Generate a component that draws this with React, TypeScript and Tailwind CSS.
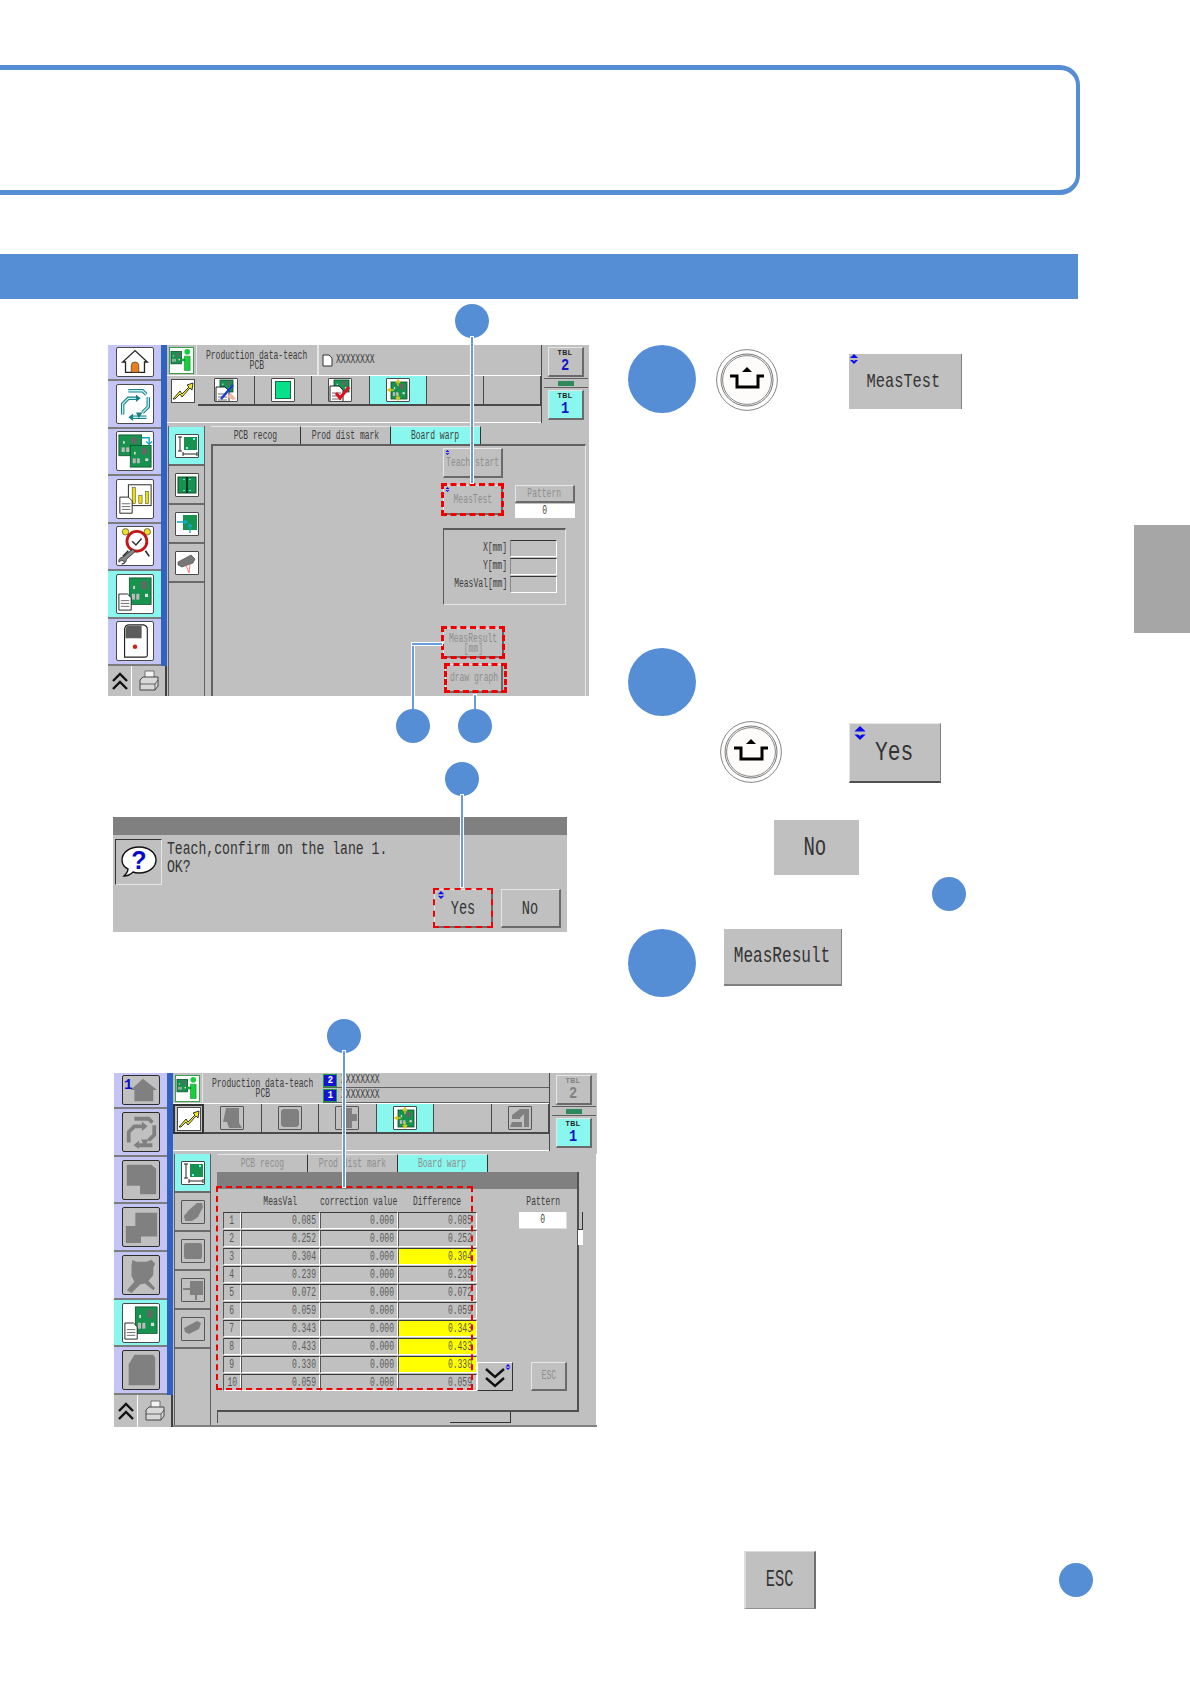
import type { ReactNode } from 'react'

const GRAY = '#808080'
const bevel =
  'border-t border-l border-t-[#e6e6e6] border-l-[#e6e6e6] border-r-2 border-b-2 border-r-[#6a6a6a] border-b-[#6a6a6a]'
const tiny = 'text-[12px] scale-x-[0.67]'
const ink = 'text-[#3c3c3c]'
const off = 'text-[#8e8e8e]'

function Txt({ className, children }: { className: string; children: ReactNode }) {
  return <span className={`inline-block whitespace-nowrap leading-none ${className}`}>{children}</span>
}

function Circle({ className }: { className: string }) {
  return <div className={`shrink-0 rounded-full bg-[#558ed5] ${className}`} />
}

function UpDown({ size, className }: { size: number; className: string }) {
  return (
    <svg width={size} height={size} viewBox="0 0 10 10" className={`absolute ${className}`}>
      <path d="M5 0 9 4H1Z M1 6H3.5L5 7 6.500 6H9L5 10Z" fill="#0a0af0" />
    </svg>
  )
}

function Board({ x, y, w, h }: { x: number; y: number; w: number; h: number }) {
  return (
    <g>
      <rect x={x} y={y} width={w} height={h} fill="#17924f" stroke="#0c4f2a" strokeWidth="0.8" />
      <rect x={x + w * 0.55} y={y + h * 0.12} width={w * 0.24} height={h * 0.3} fill="#666" />
      <rect x={x + w * 0.12} y={y + h * 0.6} width={w * 0.14} height={h * 0.22} fill="#bbb" />
      <rect x={x + w * 0.32} y={y + h * 0.6} width={w * 0.14} height={h * 0.22} fill="#bbb" />
      <rect x={x + w * 0.72} y={y + h * 0.6} width={w * 0.14} height={h * 0.12} fill="#ddd" />
      <rect x={x + w * 0.18} y={y + h * 0.3} width={w * 0.08} height={h * 0.12} fill="#ddd" />
    </g>
  )
}

function Doc({ x, y }: { x: number; y: number }) {
  return (
    <g>
      <path d={`M${x} ${y}h9l4 4v13h-13Z`} fill="#fff" stroke="#222" strokeWidth="1" />
      <path d={`M${x + 2} ${y + 7}h9M${x + 2} ${y + 10}h9M${x + 2} ${y + 13}h9`} stroke="#444" strokeWidth="0.8" />
    </g>
  )
}

const Ico = ({ children, h = 38, w = 38 }: { children: ReactNode; h?: number; w?: number }) => (
  <svg width={w} height={h} viewBox={`0 0 ${w} ${h}`}>
    {children}
  </svg>
)

const swirl = 'M12 5H27L31 9M33 12V22L27 28M31 33H17M6 30V19L12 13H20'

const navEnabled = [
  <Ico h={28} key="home">
    <path d="M19 2 6 14h3v11h20V14h3Z" fill="#fff" stroke="#222" strokeWidth="1.4" />
    <path d="M15 25v-7a4 4 0 0 1 8 0v7Z" fill="#e8801f" stroke="#222" strokeWidth="0.6" />
  </Ico>,
  <Ico key="cycle">
    <path d={swirl} fill="none" stroke="#1b7f88" strokeWidth="3.6" />
    <path d={swirl} fill="none" stroke="#bff4f4" strokeWidth="1.4" />
    <path d="M20 9v8l5-4ZM27 28h-7l3 6ZM17 29v8l-5-4Z" fill="#1b7f88" />
  </Ico>,
  <Ico key="pcbs">
    <Board x={2} y={2} w={24} h={22} />
    <Board x={14} y={13} w={22} h={23} />
    <path d="M26 5h8v6M31 9l3 3 3-3" fill="none" stroke="#0aa6c8" strokeWidth="1.4" />
  </Ico>,
  <Ico key="chart">
    <rect x="12" y="4" width="24" height="22" fill="#fff" stroke="#222" />
    <rect x="16" y="7" width="3.5" height="17" fill="#e8e010" stroke="#333" strokeWidth="0.5" />
    <rect x="23" y="15" width="3.5" height="9" fill="#e8e010" stroke="#333" strokeWidth="0.5" />
    <rect x="30" y="11" width="3.5" height="13" fill="#e8e010" stroke="#333" strokeWidth="0.5" />
    <Doc x={3} y={17} />
  </Ico>,
  <Ico key="alarm">
    <circle cx="9" cy="4" r="3.4" fill="#ece028" stroke="#222" strokeWidth="0.6" />
    <circle cx="32" cy="4" r="3.4" fill="#ece028" stroke="#222" strokeWidth="0.6" />
    <circle cx="21" cy="14" r="10.5" fill="#fff" stroke="#c01818" strokeWidth="3" />
    <path d="M16 14l4 4 6-7" fill="none" stroke="#333" strokeWidth="1.5" />
    <path d="M30 24l4 6M12 24l-6 6" stroke="#222" strokeWidth="1.6" />
    <path d="M17 22 6 31a4 4 0 0 0-4 5l3-2 2 1 1 2-3 1a5 5 0 0 0 5-5l9-8Z" fill="#888" stroke="#222" strokeWidth="0.8" />
  </Ico>,
  <Ico key="board">
    <Board x={13} y={2} w={23} h={28} />
    <Doc x={2} y={19} />
  </Ico>,
  <Ico key="machine">
    <path d="M8 6a5 5 0 0 1 5-4h15a5 5 0 0 1 4 5v27a2 2 0 0 1-2 2H8Z" fill="#fff" stroke="#222" strokeWidth="1.2" />
    <path d="M9 7a4 4 0 0 1 4-4h13v13H9Z" fill="#5c5c5c" />
    <circle cx="19" cy="25" r="2.4" fill="#d02020" />
  </Ico>,
]

const Sil = ({ d, h = 38, w = 38 }: { d: string; h?: number; w?: number }) => (
  <svg width={w} height={h} viewBox={`0 0 ${w} ${h}`}>
    <path d={d} fill={GRAY} />
  </svg>
)

const navDim = [
  <Ico h={28} key="home">
    <path d="M21 2 8 14h4v12h20V14h4Z" fill={GRAY} />
    <text x="1" y="13" fontSize="15" fontWeight="700" fill="#0a0ad0" fontFamily="Liberation Mono">1</text>
  </Ico>,
  <Ico key="c">
    <path d={swirl} fill="none" stroke={GRAY} strokeWidth="4" />
    <path d="M20 8v10l6-5ZM27 27h-8l4 7ZM17 28v9l-6-4Z" fill={GRAY} />
  </Ico>,
  <Sil key="p" d="M4 3h26l5 4v27H18v-9H4Z" />,
  <Sil key="q" d="M13 4h23v25H19v7H3V18h10Z" />,
  <Sil key="r" d="M10 3l4 2h11l5-2 4 4-2 4v8l-5 6 7 8-2 2-9-7-5 1-9 9-5-3 8-9-3-6V9Z" />,
  null,
  <Sil key="m" d="M12 3h20l2 3v29H6V13Z" />,
]

function NavBtn({ children, dim }: { children: ReactNode; dim: boolean }) {
  return (
    <div className={`flex w-[38px] items-center justify-center rounded-[2px] border ${dim ? 'border-[#2c2c2c] bg-[#c0c0c0]' : 'border-[#4a4a4a] bg-white'}`}>
      {children}
    </div>
  )
}

function Nav({ dim, bottomH }: { dim: boolean; bottomH: string }) {
  return (
    <div className="flex h-full w-[59px] shrink-0 flex-col">
      <div className="flex min-h-0 flex-1 flex-col border-r-[6px] border-r-[#2f62c4]">
        {navEnabled.map((ic, i) => {
          const active = i === 5
          const shown = dim && !active ? navDim[i] : ic
          return (
            <div
              key={i}
              className={`flex items-center justify-center border-b-2 border-b-[#7c7c7c] ${i === 0 ? 'h-[36px] shrink-0' : 'flex-1'} ${active ? 'bg-[#8af7ee]' : 'bg-[#c5c5f5]'}`}
            >
              <NavBtn dim={dim && !active}>{shown}</NavBtn>
            </div>
          )
        })}
      </div>
      <div className={`flex shrink-0 ${bottomH}`}>
        <div className="flex w-[24px] items-center justify-center border-r border-r-white">
          <svg width="18" height="22" viewBox="0 0 18 22">
            <path d="M2 11 9 4l7 7M2 19l7-7 7 7" fill="none" stroke="#111" strokeWidth="2.4" />
          </svg>
        </div>
        <div className="flex flex-1 items-center justify-center border-r-2 border-r-[#404040]">
          <svg width="24" height="24" viewBox="0 0 24 24">
            <path d="M8 2h9v8H8Z" fill="#f4f4f4" stroke="#555" strokeWidth="0.8" />
            <path d="M3 11l3-3h15v9l-3 4H3Z" fill="#d8d8d8" stroke="#444" strokeWidth="1" />
            <path d="M3 15h15v6M18 15l3-4" fill="none" stroke="#444" strokeWidth="0.8" />
          </svg>
        </div>
      </div>
    </div>
  )
}

function Person() {
  return (
    <div className="flex h-[27px] w-[25px] items-center justify-center border border-[#3aa04a] bg-white">
      <svg width="24" height="24" viewBox="0 0 24 24">
        <Board x={1} y={3} w={11} h={13} />
        <circle cx="18" cy="3.5" r="3" fill="#16d03a" />
        <path d="M15 8h6v15h-6Zm-4 3h4v2h-4Z" fill="#16d03a" stroke="#0a6a20" strokeWidth="0.5" />
      </svg>
    </div>
  )
}

function ToolBtn({ children, dim }: { children: ReactNode; dim?: boolean }) {
  return (
    <div className={`flex h-[24px] w-[24px] items-center justify-center rounded-[1px] border ${dim ? 'border-[#555] bg-[#c0c0c0]' : 'border-[#4a4a4a] bg-white'}`}>
      {children}
    </div>
  )
}

function Tbl({ n, on, dim }: { n: string; on?: boolean; dim?: boolean }) {
  return (
    <div className={`flex h-[30px] w-[36px] flex-col items-center justify-center ${on ? 'bg-[#8af7ee]' : 'bg-[#c0c0c0]'} ${bevel}`}>
      <Txt className={`text-[7px] font-bold tracking-[0.5px] font-['Liberation_Sans',sans-serif] ${dim ? 'text-[#808080]' : 'text-[#222]'}`}>TBL</Txt>
      <Txt className={`mt-[1px] text-[17px] font-bold scale-x-[0.8] ${dim ? 'text-[#808080]' : 'text-[#1414c0]'}`}>{n}</Txt>
    </div>
  )
}

function TopBar({ info, tools, tblDim, chartBoxed }: { info: ReactNode; tools: (ReactNode | null)[]; tblDim?: boolean; chartBoxed?: boolean }) {
  return (
    <div className="flex shrink-0">
      <div className="flex min-w-0 flex-1 flex-col">
        <div className="flex h-[30px]">
          <div className="flex w-[30px] shrink-0 items-center justify-center border-r border-r-[#e6e6e6]">
            <Person />
          </div>
          <div className="flex w-[120px] shrink-0 flex-col items-center pt-[5px]">
            <Txt className={`${tiny} ${ink} h-[10px]`}>Production data-teach</Txt>
            <Txt className={`${tiny} ${ink} h-[10px]`}>PCB</Txt>
          </div>
          {info}
        </div>
        <div className="flex h-[31px] border-t border-t-white">
          <div className={`flex w-[31px] shrink-0 items-center justify-center ${chartBoxed ? 'border-2 border-[#333]' : ''}`}>
            <div className="flex h-[24px] w-[24px] items-center justify-center border border-[#4a4a4a] bg-white">
              <svg width="22" height="20" viewBox="0 0 22 20">
                <path d="M1 18 8 10l2 3 7-7-2-2 6-2-1 7-2-2-8 9-2-3-5 5Z" fill="#f0e820" stroke="#222" strokeWidth="0.9" />
              </svg>
            </div>
          </div>
          <div className="flex flex-1 border-b-2 border-b-[#4a4a4a]">
            {tools.map((t, i) => (
              <div key={i} className={`flex flex-1 items-center justify-center border-r border-r-[#4a4a4a] ${i === 3 ? 'bg-[#8af7ee]' : ''}`}>
                {t}
              </div>
            ))}
          </div>
        </div>
        <div className="h-[17px] border-b border-b-white" />
      </div>
      <div className="flex w-[48px] shrink-0 flex-col items-center border-l border-l-[#4a4a4a] pt-[2px]">
        <Tbl n="2" dim={tblDim} />
        <div className="mt-[1px] flex h-[10px] w-[44px] items-center justify-center border-y border-y-[#606060] bg-[#c0c0c0]">
          <div className="h-[5px] w-[16px] bg-[#2e8a58]" />
        </div>
        <div className="mt-[2px]">
          <Tbl n="1" on />
        </div>
      </div>
    </div>
  )
}

function SubNav({ items, className = '' }: { items: ReactNode[]; className?: string }) {
  return (
    <div className={`mx-[1px] flex w-[37px] shrink-0 flex-col border-x border-x-[#606060] ${className}`}>
      {items.map((ic, i) => (
        <div key={i} className={`flex h-[39px] items-center justify-center border-b-2 border-b-[#6a6a6a] ${i === 0 ? 'bg-[#8af7ee]' : ''}`}>
          {ic}
        </div>
      ))}
    </div>
  )
}

function Tabs({ dim }: { dim?: boolean }) {
  return (
    <div className="flex h-[18px] shrink-0">
      {['PCB recog', 'Prod dist mark', 'Board warp'].map((t, i) => (
        <div
          key={t}
          className={`flex w-[90px] items-center justify-center border-t border-t-[#e6e6e6] border-r border-r-[#333] ${i === 2 ? 'bg-[#8af7ee]' : ''}`}
        >
          <Txt className={`${tiny} ${dim ? off : ink}`}>{t}</Txt>
        </div>
      ))}
    </div>
  )
}

function Dash({ className }: { className: string }) {
  return <div className={`pointer-events-none absolute border-dashed border-[#f00000] ${className}`} />
}

function PanelBtn({ label, className, dash, mark }: { label: ReactNode; className: string; dash?: string; mark?: boolean }) {
  return (
    <div className={`relative flex flex-col items-center justify-center ${bevel} ${className}`}>
      {mark && <UpDown size={5} className="left-[1px] top-[1px]" />}
      {label}
      {dash && <Dash className={`border-[3px] ${dash}`} />}
    </div>
  )
}

function Readout({ label }: { label: string }) {
  return (
    <div className="flex h-[18px] items-center justify-end">
      <Txt className={`${tiny} ${ink} origin-right`}>{label}</Txt>
      <div className="ml-[3px] h-[17px] w-[47px] shrink-0 border-t border-l border-t-[#333] border-l-[#888] border-b border-r border-b-white border-r-white" />
    </div>
  )
}

function Screen1() {
  return (
    <div className="relative ml-[108px] flex h-[351px] w-[481px] bg-[#c0c0c0]">
      <Nav dim={false} bottomH="h-[30px]" />
      <div className="flex min-w-0 flex-1 flex-col">
        <TopBar
          info={
            <div className="flex flex-1 items-center gap-[3px] border-l-2 border-l-[#e6e6e6] pl-[3px]">
              <svg width="11" height="13" viewBox="0 0 11 13">
                <path d="M1 1h6l3 3v8H1Z" fill="#fff" stroke="#333" />
              </svg>
              <Txt className={`${tiny} ${ink} origin-left`}>XXXXXXXX</Txt>
            </div>
          }
          tools={[
            <ToolBtn key="a">
              <svg width="22" height="22" viewBox="0 0 22 22">
                <Board x={5} y={1} w={13} h={12} />
                <Doc x={1} y={8} />
                <path d="M6 20 18 6" stroke="#1d3ad0" strokeWidth="2.4" />
                <path d="M12 18l4-4 5 6-3 1Z" fill="#f0b8a8" />
              </svg>
            </ToolBtn>,
            <ToolBtn key="b">
              <div className="h-[18px] w-[16px] border border-[#1a6a40] bg-[#06e08a]" />
            </ToolBtn>,
            <ToolBtn key="c">
              <svg width="22" height="22" viewBox="0 0 22 22">
                <Board x={5} y={1} w={15} h={12} />
                <Doc x={1} y={7} />
                <path d="M7 14l4 5 9-11" fill="none" stroke="#e01020" strokeWidth="3" />
              </svg>
            </ToolBtn>,
            <ToolBtn key="d">
              <svg width="22" height="22" viewBox="0 0 22 22">
                <Board x={4} y={3} w={16} h={17} />
                <path d="M1 11h6M4 9l-3 2 3 2M11 1v6M9 4l2-3 2 3M11 15v6M9 18l2 3 2-3" fill="none" stroke="#d8c820" strokeWidth="1.4" />
              </svg>
            </ToolBtn>,
            null,
            null,
          ]}
        />
        <div className="flex min-h-0 flex-1 pt-[3px]">
          <SubNav
            className="pt-[1px]"
            items={[
              <ToolBtn key="a">
                <svg width="22" height="22" viewBox="0 0 22 22">
                  <rect x="8" y="2" width="13" height="13" fill="#17924f" />
                  <path d="M4 2v14M2 2h4M2 16h4M7 19h14M7 17v4M21 17v4" stroke="#222" strokeWidth="1" fill="none" />
                  <rect x="17" y="3" width="2" height="2" fill="#7ff" />
                  <rect x="10" y="12" width="2" height="2" fill="#7ff" />
                </svg>
              </ToolBtn>,
              <ToolBtn key="b">
                <svg width="20" height="18" viewBox="0 0 20 18">
                  <rect x="1" y="1" width="18" height="16" fill="#17924f" stroke="#0c4f2a" />
                  <path d="M10 1v16" stroke="#111" strokeWidth="1.4" />
                  <path d="M7 3v1M13 3v1M7 14v1M13 14v1" stroke="#7ff" strokeWidth="1.5" />
                </svg>
              </ToolBtn>,
              <ToolBtn key="c">
                <svg width="22" height="22" viewBox="0 0 22 22">
                  <rect x="7" y="2" width="14" height="15" fill="#17924f" />
                  <path d="M1 9h10M8 7l3 2-3 2M14 20v-9M12 14l2-3 2 3" fill="none" stroke="#10a8c8" strokeWidth="1.3" />
                </svg>
              </ToolBtn>,
              <ToolBtn key="d">
                <svg width="22" height="22" viewBox="0 0 22 22">
                  <path d="M2 10 15 3l4 4-2 4-11 4-4-2Z" fill="#777" stroke="#444" strokeWidth="0.6" />
                  <path d="M10 13l3 8 1-9" fill="none" stroke="#f06060" strokeWidth="0.8" />
                </svg>
              </ToolBtn>,
            ]}
          />
          <div className="flex min-w-0 flex-1 flex-col pl-[5px] pr-[3px]">
            <Tabs />
            <div className="flex min-h-0 flex-1 justify-end border-t-2 border-l-2 border-t-[#606060] border-l-[#606060] border-r border-r-[#e6e6e6] pr-[10px] pt-[2px]">
              <div className="flex w-[132px] flex-col">
                <PanelBtn mark className="h-[30px] w-[60px]" label={<Txt className={`${tiny} ${off}`}>Teach start</Txt>} />
                <div className="mt-[7px] flex justify-between">
                  <PanelBtn mark className="h-[30px] w-[60px]" dash="-inset-x-[3px] -inset-y-[3px]" label={<Txt className={`${tiny} ${off}`}>MeasTest</Txt>} />
                  <div className="flex w-[60px] flex-col">
                    <div className={`flex h-[18px] items-center justify-center ${bevel}`}>
                      <Txt className={`${tiny} ${off}`}>Pattern</Txt>
                    </div>
                    <div className="mt-[1px] flex h-[14px] items-center justify-center bg-white">
                      <Txt className={`${tiny} text-[#444]`}>0</Txt>
                    </div>
                  </div>
                </div>
                <div className="mt-[10px] h-[77px] w-[123px] border-t-2 border-l border-t-[#5a5a5a] border-l-[#5a5a5a] border-b border-r border-b-[#e6e6e6] border-r-[#e6e6e6] pr-[8px] pt-[9px]">
                  <Readout label="X[mm]" />
                  <Readout label="Y[mm]" />
                  <Readout label="MeasVal[mm]" />
                </div>
                <PanelBtn
                  className="mt-[23px] h-[30px] w-[61px]"
                  dash="-inset-x-[3px] -inset-y-[3px]"
                  label={
                    <>
                      <Txt className={`${tiny} ${off} h-[10px]`}>MeasResult</Txt>
                      <Txt className={`${tiny} ${off} h-[10px]`}>[mm]</Txt>
                    </>
                  }
                />
                <PanelBtn
                  className="ml-[2px] mt-[6px] h-[29px] w-[58px]"
                  dash="-left-[2px] -right-[6px] -inset-y-[2px]"
                  label={<Txt className={`${tiny} ${off}`}>draw graph</Txt>}
                />
              </div>
            </div>
          </div>
        </div>
      </div>

      {/* callouts */}
      <Circle className="absolute left-[347px] top-[-41px] h-[34px] w-[34px]" />
      <Lead className="left-[363px] top-[-8px] h-[146px] w-[2px]" />
      <Lead className="left-[304px] top-[298px] h-[66px] w-[2px]" />
      <Lead className="left-[304px] top-[298px] h-[2px] w-[30px]" />
      <Circle className="absolute left-[288px] top-[364px] h-[34px] w-[34px]" />
      <Lead className="left-[366px] top-[350px] h-[14px] w-[2px]" />
      <Circle className="absolute left-[350px] top-[364px] h-[34px] w-[34px]" />
    </div>
  )
}

function Lead({ className }: { className: string }) {
  return <div className={`absolute bg-[#6a9bdc] shadow-[0_0_0_1px_#fff] ${className}`} />
}

function Dialog() {
  return (
    <div className="relative ml-[113px] mt-[121px] flex h-[115px] w-[454px] flex-col bg-[#c0c0c0]">
      <div className="h-[18px] shrink-0 bg-[#808080]" />
      <div className="flex min-h-0 flex-1 flex-col px-[2px] pt-[4px]">
        <div className="flex">
          <div className="flex h-[46px] w-[47px] shrink-0 items-center justify-center border-t border-l border-t-[#333] border-l-[#333] border-b border-r border-b-[#e6e6e6] border-r-[#e6e6e6]">
            <svg width="38" height="34" viewBox="0 0 38 34">
              <path d="M19 2c10 0 17 6 17 13s-7 13-17 13c-2 0-4 0-6-1-2 2-5 4-9 4 2-2 4-4 4-7-4-2-6-5-6-9C2 8 9 2 19 2Z" fill="#fff" stroke="#111" strokeWidth="1.4" />
              <text x="19" y="24" textAnchor="middle" fontSize="25" fontWeight="700" fill="#0808c8" fontFamily="Liberation Sans">?</text>
            </svg>
          </div>
          <div className="ml-[5px] mt-[1px] flex flex-col items-start">
            <Txt className="origin-left text-[19px] h-[18px] scale-x-[0.69] text-[#333]">Teach,confirm on the lane 1.</Txt>
            <Txt className="origin-left text-[19px] h-[18px] scale-x-[0.69] text-[#333]">OK?</Txt>
          </div>
        </div>
        <div className="mt-[4px] flex justify-end gap-[8px] pr-[4px]">
          <div className={`relative flex h-[39px] w-[59px] items-center justify-center pt-[1px] ${bevel}`}>
            <UpDown size={8} className="left-[2px] top-[1px]" />
            <Txt className="text-[20px] scale-x-[0.68] text-[#333]">Yes</Txt>
            <Dash className="-inset-x-[2px] -inset-y-[2px] border-2" />
          </div>
          <div className={`flex h-[39px] w-[60px] items-center justify-center pt-[1px] ${bevel}`}>
            <Txt className="text-[20px] scale-x-[0.68] text-[#333]">No</Txt>
          </div>
        </div>
      </div>
      <Circle className="absolute left-[332px] top-[-55px] h-[34px] w-[34px]" />
      <Lead className="left-[348px] top-[-22px] h-[92px] w-[2px]" />
    </div>
  )
}

const rows = [
  ['1', '0.085', '0.085'],
  ['2', '0.252', '0.252'],
  ['3', '0.304', '0.304', 'y'],
  ['4', '0.239', '0.239'],
  ['5', '0.072', '0.072'],
  ['6', '0.059', '0.059'],
  ['7', '0.343', '0.343', 'y'],
  ['8', '0.433', '0.433', 'y'],
  ['9', '0.330', '0.330', 'y'],
  ['10', '0.059', '0.059'],
]

const cell = 'flex h-[17px] items-center border-t border-l border-t-[#3a3a3a] border-l-[#555] border-b border-r border-b-white border-r-white'
const num = `${tiny} text-[#5a5a5a] origin-right`

function Screen2() {
  return (
    <div className="relative ml-[114px] mt-[141px] flex h-[354px] w-[483px] bg-[#c0c0c0]">
      <Nav dim bottomH="h-[32px]" />
      <div className="flex min-w-0 flex-1 flex-col border-b-2 border-b-[#808080]">
        <TopBar
          tblDim
          chartBoxed
          info={
            <div className="flex flex-1 flex-col">
              {['2', '1'].map((n) => (
                <div key={n} className="flex h-[15px] flex-1 items-center border-b border-b-[#606060]">
                  <div className="flex h-[13px] w-[14px] items-center justify-center border border-[#18a040] bg-[#1414d0]">
                    <Txt className="text-[11px] font-bold text-white scale-x-[0.8]">{n}</Txt>
                  </div>
                  <Txt className={`${tiny} ${ink} ml-[4px] origin-left`}>XXXXXXXX</Txt>
                </div>
              ))}
            </div>
          }
          tools={[
            <ToolBtn dim key="a">
              <Sil w={22} h={22} d="M5 1h13v15l3 5H8l-2-6H2Z" />
            </ToolBtn>,
            <ToolBtn dim key="b">
              <Sil w={20} h={20} d="M3 1h14l2 2v14l-2 2H3L1 17V3Z" />
            </ToolBtn>,
            <ToolBtn dim key="c">
              <Sil w={22} h={22} d="M5 1h11v6h5v7h-5v7H5Z" />
            </ToolBtn>,
            <ToolBtn key="d">
              <svg width="22" height="22" viewBox="0 0 22 22">
                <Board x={4} y={3} w={16} h={17} />
                <path d="M1 11h6M4 9l-3 2 3 2M11 1v6M9 4l2-3 2 3M11 15v6M9 18l2 3 2-3" fill="none" stroke="#d8c820" strokeWidth="1.4" />
              </svg>
            </ToolBtn>,
            null,
            <ToolBtn dim key="e">
              <Sil w={22} h={22} d="M3 8 11 2h9v18h-5V7l-4 4v1H3Zm0 7h10v5H1Z" />
            </ToolBtn>,
          ]}
        />
        <div className="flex min-h-0 flex-1 pt-[3px]">
          <SubNav
            items={[
              <ToolBtn key="a">
                <svg width="22" height="22" viewBox="0 0 22 22">
                  <rect x="8" y="2" width="13" height="13" fill="#17924f" />
                  <path d="M4 2v14M2 2h4M2 16h4M7 19h14M7 17v4M21 17v4" stroke="#222" strokeWidth="1" fill="none" />
                  <rect x="17" y="3" width="2" height="2" fill="#7ff" />
                  <rect x="10" y="12" width="2" height="2" fill="#7ff" />
                </svg>
              </ToolBtn>,
              <ToolBtn dim key="b">
                <Sil w={22} h={22} d="M15 2h5l1 4-5 10-6 4H3l-1-5 5-6Z" />
              </ToolBtn>,
              <ToolBtn dim key="c">
                <Sil w={20} h={18} d="M2 1h16l1 2v12l-1 2H2l-1-2V3Z" />
              </ToolBtn>,
              <ToolBtn dim key="d">
                <Sil w={22} h={22} d="M8 2h13v14h-6v5h-2v-5H8v-5H1V9h7Z" />
              </ToolBtn>,
              <ToolBtn dim key="e">
                <Sil w={22} h={22} d="M2 10 15 3l4 2-2 6-10 5-4-2Z" />
              </ToolBtn>,
            ]}
          />
          <div className="flex min-w-0 flex-1 flex-col border-r border-r-white pl-[5px] pr-[17px]">
            <div className="ml-[1px]">
              <Tabs dim />
            </div>
            <div className="relative flex h-[240px] shrink-0 flex-col border-r-2 border-b-2 border-r-[#505050] border-b-[#505050]">
              <div className="h-[17px] shrink-0 bg-[#808080]" />
              <div className="flex min-h-0 flex-1 pl-[6px] pt-[7px]">
                <div className="flex w-[254px] shrink-0 flex-col">
                  <div className="grid h-[16px] grid-cols-[18px_79px_78px_79px] pb-[4px]">
                    <div />
                    {['MeasVal', 'correction value', 'Difference'].map((h) => (
                      <div key={h} className="flex items-start justify-center">
                        <Txt className={`${tiny} ${ink}`}>{h}</Txt>
                      </div>
                    ))}
                  </div>
                  {rows.map((r) => (
                    <div key={r[0]} className="mb-[1px] grid grid-cols-[18px_79px_78px_79px]">
                      <div className={`${cell} justify-center`}>
                        <Txt className={`${tiny} text-[#5a5a5a]`}>{r[0]}</Txt>
                      </div>
                      <div className={`${cell} justify-end pr-[3px]`}>
                        <Txt className={num}>{r[1]}</Txt>
                      </div>
                      <div className={`${cell} justify-end pr-[3px]`}>
                        <Txt className={num}>0.000</Txt>
                      </div>
                      <div className={`${cell} justify-end pr-[4px] ${r[3] ? 'bg-[#ffff00]' : ''}`}>
                        <Txt className={num}>{r[2]}</Txt>
                      </div>
                    </div>
                  ))}
                </div>
                <div className="flex w-[36px] shrink-0 flex-col justify-end pb-[19px]">
                  <div className="relative flex h-[29px] items-center justify-center border-t border-l border-t-white border-l-white border-r border-b border-r-[#333] border-b-[#333]">
                    <svg width="24" height="24" viewBox="0 0 24 24">
                      <path d="M3 4l9 8 9-8M3 13l9 8 9-8" fill="none" stroke="#111" strokeWidth="2.4" />
                    </svg>
                    <UpDown size={6} className="right-[1px] top-[1px]" />
                  </div>
                </div>
                <div className="ml-[6px] flex w-[48px] shrink-0 flex-col items-center pb-[19px]">
                  <Txt className={`${tiny} ${ink} h-[16px]`}>Pattern</Txt>
                  <div className="flex h-[17px] w-full items-center justify-center border-b border-r border-b-[#ddd] border-r-[#ddd] bg-white">
                    <Txt className={`${tiny} text-[#444]`}>0</Txt>
                  </div>
                  <div className={`mt-auto flex h-[29px] w-[36px] items-center justify-center self-end ${bevel}`}>
                    <Txt className={`${tiny} ${off}`}>ESC</Txt>
                  </div>
                </div>
              </div>
              <div className="absolute left-[361px] top-[40px] h-[18px] w-[5px] border-b border-r border-b-[#333] border-r-[#333]" />
              <div className="absolute left-[361px] top-[58px] h-[15px] w-[5px] bg-white" />
              <Dash className="left-[-1px] top-[14px] h-[204px] w-[257px] border-2" />
            </div>
            <div className="flex h-[11px] w-[294px] justify-end border-l border-l-[#505050]">
              <div className="w-[61px] border-r border-b border-r-[#333] border-b-[#333]" />
            </div>
          </div>
        </div>
      </div>
      <Circle className="absolute left-[213px] top-[-54px] h-[34px] w-[34px]" />
      <Lead className="left-[229px] top-[-22px] h-[136px] w-[2px]" />
    </div>
  )
}

function ShiftKey() {
  return (
    <svg width="62" height="62" viewBox="0 0 62 62" className="shrink-0">
      <circle cx="31" cy="31" r="30.4" fill="#fff" stroke="#666" strokeWidth="0.8" />
      <circle cx="31" cy="31" r="26" fill="#fff" stroke="#666" strokeWidth="0.9" />
      <circle cx="31" cy="31" r="24.4" fill="#fdfcfb" stroke="#777" strokeWidth="0.9" />
      <path d="M14 27h7v11h21V27h6" fill="none" stroke="#000" strokeWidth="3" />
      <path d="M31 18l-5 5h10Z" fill="#000" />
    </svg>
  )
}

function BigBtn({ label, className, text, mark }: { label: string; className: string; text: string; mark?: string }) {
  return (
    <div className={`relative flex shrink-0 items-center justify-center bg-[#c0c0c0] ${className}`}>
      {mark && <UpDown size={mark === 'lg' ? 14 : 10} className={mark === 'lg' ? 'left-[3px] top-[2px]' : 'left-0 top-0'} />}
      <Txt className={`text-[#333] ${text}`}>{label}</Txt>
    </div>
  )
}

export default function App() {
  return (
    <div className="relative h-[1684px] w-[1190px] overflow-hidden bg-white font-['Liberation_Mono','DejaVu_Sans_Mono',monospace]">
      <div className="-ml-[40px] mt-[65px] h-[130px] w-[1120px] rounded-[20px] border-y-[5px] border-r-[4px] border-l-[5px] border-[#558ed5]" />
      <div className="mt-[59px] h-[45px] w-[1078px] bg-[#558ed5]" />

      <div className="flex">
        <div className="w-[628px] shrink-0 pt-[46px]">
          <Screen1 />
          <Dialog />
          <Screen2 />
        </div>

        <div className="w-[506px] shrink-0 pt-[46px]">
          <div className="flex items-start">
            <Circle className="h-[68px] w-[68px]" />
            <div className="ml-[20px] mt-[4px]">
              <ShiftKey />
            </div>
            <BigBtn
              label="MeasTest"
              mark="sm"
              text="text-[21px] scale-x-[0.73] -ml-[3px]"
              className="ml-[71px] mt-[9px] h-[55px] w-[113px] border-r border-r-[#808080]"
            />
          </div>

          <Circle className="mt-[235px] h-[68px] w-[68px]" />
          <div className="ml-[92px] mt-[5px] flex items-start">
            <ShiftKey />
            <BigBtn
              label="Yes"
              mark="lg"
              text="text-[28px] scale-x-[0.76] -ml-[2px]"
              className="ml-[67px] mt-[2px] h-[60px] w-[92px] border-t border-l border-t-[#e6e6e6] border-l-[#e6e6e6] border-r border-b-2 border-r-[#808080] border-b-[#505050]"
            />
          </div>

          <BigBtn label="No" text="text-[28px] scale-x-[0.68] -ml-[3px]" className="ml-[146px] mt-[37px] h-[55px] w-[85px]" />
          <Circle className="ml-[304px] mt-[2px] h-[34px] w-[34px]" />

          <div className="mt-[18px] flex items-start">
            <Circle className="h-[68px] w-[68px]" />
            <BigBtn
              label="MeasResult"
              text="text-[22px] scale-x-[0.73]"
              className="ml-[28px] h-[57px] w-[118px] border-b-2 border-r border-b-[#808080] border-r-[#808080]"
            />
          </div>

          <div className="mt-[554px] flex items-center">
            <BigBtn
              label="ESC"
              text="text-[24px] scale-x-[0.64]"
              className="ml-[116px] h-[58px] w-[72px] border-l-2 border-t border-r-2 border-b border-l-[#dcdcdc] border-t-[#dcdcdc] border-r-[#707070] border-b-[#909090]"
            />
            <Circle className="ml-[243px] h-[34px] w-[34px]" />
          </div>
        </div>

        <div className="mt-[226px] h-[108px] w-[56px] bg-[#a6a6a6]" />
      </div>
    </div>
  )
}
